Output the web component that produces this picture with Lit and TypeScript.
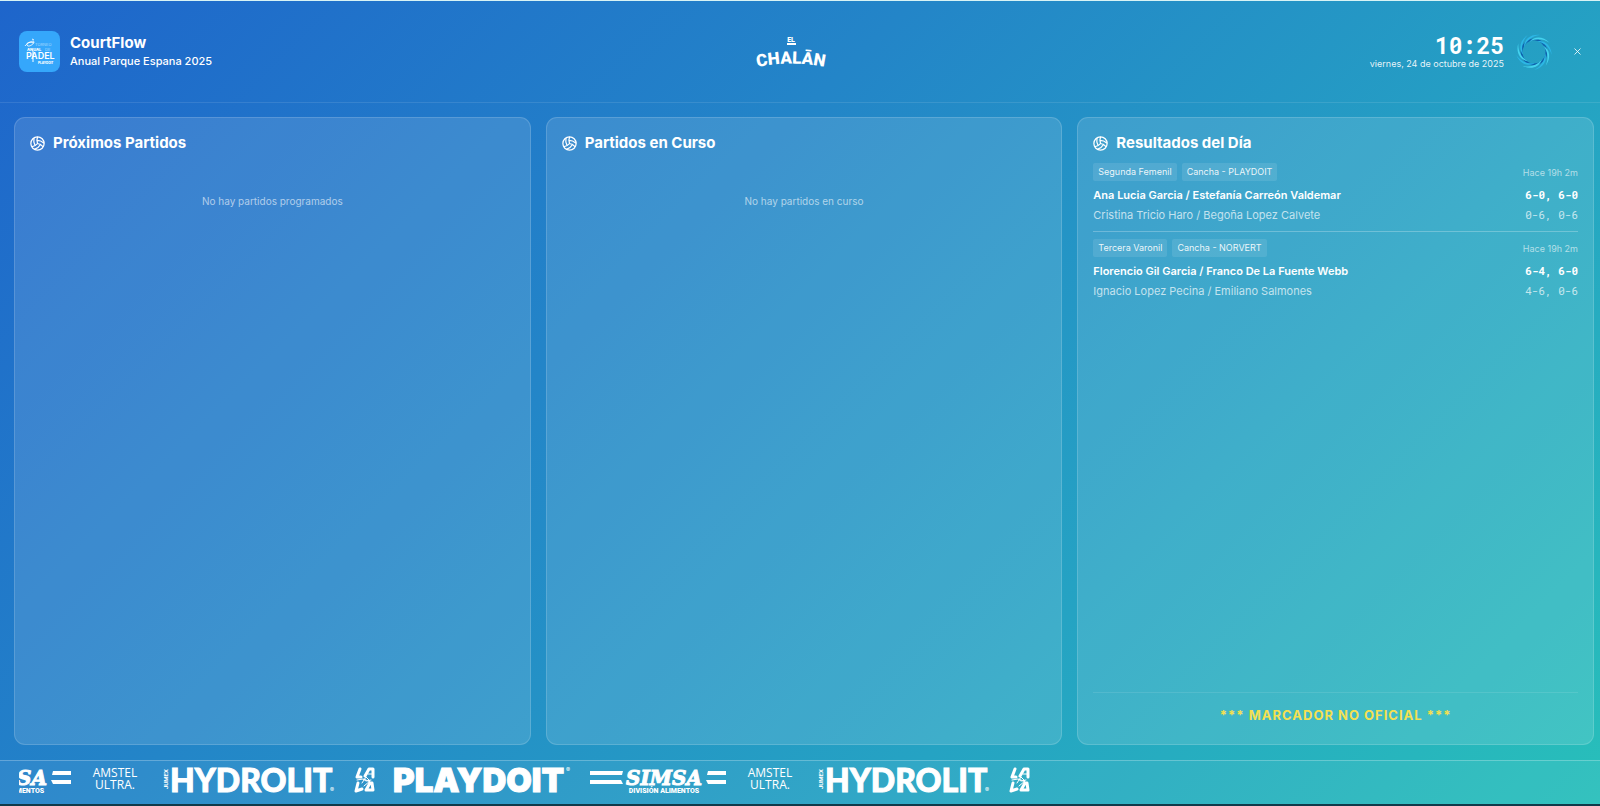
import { LitElement, html, svg, css } from "lit";
import { customElement, property, state } from "lit/decorators.js";

interface Match {
  category: string;
  court: string;
  ago: string;
  winner: string;
  winnerScore: string;
  loser: string;
  loserScore: string;
}

const RESULTS: Match[] = [
  {
    category: "Segunda Femenil",
    court: "Cancha - PLAYDOIT",
    ago: "Hace 19h 2m",
    winner: "Ana Lucia Garcia / Estefanía Carreón Valdemar",
    winnerScore: "6-0, 6-0",
    loser: "Cristina Tricio Haro / Begoña Lopez Calvete",
    loserScore: "0-6, 0-6",
  },
  {
    category: "Tercera Varonil",
    court: "Cancha - NORVERT",
    ago: "Hace 19h 2m",
    winner: "Florencio Gil Garcia / Franco De La Fuente Webb",
    winnerScore: "6-4, 6-0",
    loser: "Ignacio Lopez Pecina / Emiliano Salmones",
    loserScore: "4-6, 0-6",
  },
];

const SPONSORS = ["simsa", "amstel", "hydrolit", "la", "playdoit", "simsa", "amstel", "hydrolit", "la"];

@customElement("court-panel")
class CourtPanel extends LitElement {
  @property() heading = "";

  static styles = css`
    :host {
      display: flex;
      flex-direction: column;
      min-width: 0;
      box-sizing: border-box;
      padding: 15px;
      border: 1px solid rgba(255, 255, 255, 0.15);
      border-radius: 11px;
      background: rgba(255, 255, 255, 0.12);
    }
    .head {
      display: flex;
      align-items: center;
      gap: 8px;
      height: 20px;
      margin-bottom: 10px;
    }
    .ball {
      width: 15px;
      height: 15px;
      fill: none;
      stroke: #fff;
      stroke-width: 2;
      stroke-linecap: round;
    }
    .title {
      margin: 0;
      font-size: 15px;
      line-height: 20px;
      font-weight: 700;
    }
  `;

  render() {
    return html`
      <div class="head">
        <svg class="ball" viewBox="0 0 24 24" aria-hidden="true">
          <circle cx="12" cy="12" r="10.6" />
          <path d="M11.1 7.1a16.55 16.55 0 0 1 10.9 4M12 12a12.6 12.6 0 0 1-8.7 5M16.8 13.6a16.55 16.55 0 0 1-9 7.5M20.7 17a12.8 12.8 0 0 0-8.7-5 13.3 13.3 0 0 1 0-10M6.3 3.8a16.55 16.55 0 0 0 1.9 11.5" />
        </svg>
        <h2 class="title">${this.heading}</h2>
      </div>
      <slot></slot>
    `;
  }
}

@customElement("sponsor-logo")
class SponsorLogo extends LitElement {
  @property() name = "";

  static styles = css`
    :host {
      display: block;
      flex: none;
    }
    svg {
      display: block;
      height: 30px;
      fill: #fff;
      stroke: none;
      overflow: visible;
    }
    .simsa {
      font: italic 700 20px "DejaVu Serif", serif;
      stroke: #fff;
      stroke-width: 1;
    }
    .division {
      font: 900 7px Roboto, sans-serif;
    }
    .amstel {
      font: 500 12px "Open Sans", sans-serif;
    }
    .hydrolit {
      font: 900 32px Lato, sans-serif;
      stroke: #fff;
      stroke-width: 1;
    }
    .playdoit {
      font: 900 33px Inter, sans-serif;
      stroke: #fff;
      stroke-width: 1;
    }
    .jumex {
      font: 700 6px Roboto, sans-serif;
    }
    .mark {
      font: 400 6px Inter, sans-serif;
    }
    .line {
      fill: none;
      stroke: #fff;
      stroke-width: 3;
      stroke-linejoin: round;
      stroke-linecap: round;
    }
    .thin {
      stroke-width: 1;
    }
  `;

  private art() {
    switch (this.name) {
      case "simsa":
        return html`<svg width="136" viewBox="0 0 136 30" role="img" aria-label="SIMSA División Alimentos">
          <path d="M0 4h33l-1 4H0zM0 13h31l2 4H0zM118 4h18v4h-19zM116 13h20v4h-18z" />
          <text class="simsa" x="74" y="18" text-anchor="middle">SIMSA</text>
          <text class="division" x="74" y="26" text-anchor="middle">DIVISIÓN ALIMENTOS</text>
        </svg>`;
      case "amstel":
        return html`<svg width="51" viewBox="0 0 51 30" role="img" aria-label="Amstel Ultra">
          <text class="amstel" x="25" y="10" text-anchor="middle">AMSTEL</text>
          <text class="amstel" x="25" y="22" text-anchor="middle">ULTRA.</text>
        </svg>`;
      case "hydrolit":
        return html`<svg width="175" viewBox="0 0 175 30" role="img" aria-label="Hydrolit">
          <text class="jumex" transform="translate(8 22) rotate(-90)">JUMEX</text>
          <text class="hydrolit" x="10" y="25">HYDROLIT</text>
          <text class="mark" x="170" y="25">®</text>
        </svg>`;
      case "la":
        return html`<svg width="21" viewBox="0 0 21 30" role="img" aria-label="LA">
          <path class="line" d="M6 2 3 10h4M11 9l4-7h4v8M4 16 2 24l6-2M12 23l4-7h2l1 7z" />
          <path class="line thin" d="M3 13l6-1 3 2 5-1M8 16l4-6 4 4-6 5M14 7h4M10 12l6 3" />
        </svg>`;
      default:
        return html`<svg width="177" viewBox="0 0 177 30" role="img" aria-label="Playdoit">
          <text class="playdoit" x="-1" y="25">PLAYDOIT</text>
          <text class="mark" x="172" y="5">®</text>
        </svg>`;
    }
  }

  render() {
    return this.art();
  }
}

@customElement("app-root")
class AppRoot extends LitElement {
  @state() private tickerOffset = 84;

  static styles = css`
    :host {
      display: flex;
      flex-direction: column;
      box-sizing: border-box;
      min-height: 100vh;
      border-top: 1px solid #d8f3f5;
      border-bottom: 2px solid #103a4a;
      background: linear-gradient(135deg, #1e65cb 0%, #2385c8 38%, #25a3c3 70%, #28bfba 100%);
      color: #fff;
      font-family: Inter, "Liberation Sans", sans-serif;
      font-size: 11px;
    }
    .header {
      display: flex;
      justify-content: space-between;
      align-items: center;
      height: 101px;
      padding: 0 15px 0 19px;
      border-bottom: 1px solid rgba(255, 255, 255, 0.1);
    }
    .brand {
      display: flex;
      align-items: center;
      gap: 10px;
    }
    .badge {
      width: 41px;
      height: 41px;
    }
    .name {
      margin: 0;
      font-size: 15px;
      line-height: 19px;
      font-weight: 700;
    }
    .event {
      margin: 0;
      font-size: 11px;
      line-height: 18px;
      font-weight: 500;
    }
    .chalan {
      display: block;
      width: 76px;
      height: 34px;
      fill: #fff;
      overflow: visible;
    }
    .chalan-name {
      font: 900 17px Roboto, sans-serif;
    }
    .chalan-el {
      font: 900 7px Roboto, sans-serif;
    }
    .status {
      display: flex;
      justify-content: flex-end;
      align-items: center;
    }
    .clock {
      text-align: right;
    }
    .time {
      font: 700 23px/24px "Roboto Mono", "DejaVu Sans Mono", monospace;
    }
    .date {
      font-size: 9px;
      line-height: 13px;
      color: rgba(255, 255, 255, 0.9);
    }
    .swirl {
      width: 40px;
      height: 40px;
      margin-left: 10px;
    }
    .close {
      display: grid;
      place-items: center;
      width: 16px;
      height: 16px;
      margin-left: 15px;
      padding: 0;
      border: 0;
      background: none;
    }
    .close svg {
      width: 7px;
      height: 7px;
      stroke: rgba(255, 255, 255, 0.8);
    }
    .board {
      flex: 1;
      display: grid;
      grid-template-columns: repeat(3, minmax(0, 1fr));
      gap: 15px;
      padding: 14px 6px 15px 14px;
    }
    .empty {
      margin: 30px 0 0;
      text-align: center;
      font-size: 10px;
      line-height: 16px;
      color: rgba(255, 255, 255, 0.6);
    }
    .results {
      flex: 1;
      margin: 0;
      padding: 0;
      list-style: none;
    }
    .match {
      padding-bottom: 6px;
    }
    .match + .match {
      border-top: 1px solid rgba(255, 255, 255, 0.25);
      padding-top: 7px;
    }
    .meta {
      display: flex;
      align-items: center;
      gap: 5px;
      margin-bottom: 4px;
    }
    .chip {
      padding: 0 5px;
      border-radius: 2px;
      background: rgba(255, 255, 255, 0.1);
      font-size: 9px;
      line-height: 18px;
      color: rgba(255, 255, 255, 0.9);
    }
    .ago {
      margin-left: auto;
      font-size: 9px;
      color: rgba(255, 255, 255, 0.6);
    }
    .row {
      display: flex;
      justify-content: space-between;
      line-height: 20px;
      color: rgba(255, 255, 255, 0.7);
    }
    .row.won {
      color: #fff;
      font-weight: 600;
    }
    .score {
      font-family: "Roboto Mono", "DejaVu Sans Mono", monospace;
      font-size: 11px;
    }
    .won .score {
      font-weight: 700;
    }
    .notice {
      margin: 0;
      padding: 12px 0 4px;
      border-top: 1px solid rgba(255, 255, 255, 0.1);
      text-align: center;
      font-size: 13px;
      line-height: 20px;
      font-weight: 700;
      letter-spacing: 1px;
      color: #f5e050;
    }
    .ticker {
      padding: 6px 19px 7px;
      border-top: 1px solid rgba(255, 255, 255, 0.25);
      background: rgba(255, 255, 255, 0.06);
    }
    .window {
      overflow: hidden;
    }
    .track {
      display: flex;
      gap: 19px;
    }
  `;

  private renderBadge() {
    return html`<svg class="badge" viewBox="0 0 41 41" role="img" aria-label="Torneo Anual Padel Playdoit">
      <rect width="41" height="41" rx="8" fill="#35a7fb" />
      <g fill="#fff" font-family="Inter, sans-serif">
        <path d="M6 15c3-4 9-6 9-4s-6 6-7 3 4-3 7-2M13 8l2 1" fill="none" stroke="#fff" stroke-width="0.9" />
        <text x="16" y="15" font-size="4" opacity="0.5">TORNEO</text>
        <text x="8" y="20" font-size="4" font-weight="800">ANUAL</text>
        <text x="26" y="20" font-size="4" opacity="0.5">DE</text>
        <text x="7" y="28" font-size="9" font-weight="600">PADEL</text>
        <path d="M14 20v11" stroke="#fff" stroke-width="1" />
        <text x="19" y="33" font-size="3" font-weight="800">PLAYDOIT</text>
      </g>
    </svg>`;
  }

  private renderSwirl() {
    const outer = Array.from({ length: 9 }, (_, i) => i * 40);
    const inner = Array.from({ length: 9 }, (_, i) => i * 40 + 20);
    return html`<svg class="swirl" viewBox="-20 -20 40 40" aria-hidden="true">
      ${inner.map(
        (a) => svg`<path transform="rotate(${a})" fill="#0f62ae"
          d="M-13 0C-14 -7 -7 -13 1 -13C-5 -12 -10 -8 -13 0Z" />`
      )}
      ${outer.map(
        (a, i) => svg`<path transform="rotate(${a})" fill=${i % 2 ? "#45d3ef" : "#2db6e6"}
          d="M-10 -5C-10 -13 -3 -18 6 -17C-2 -16 -7 -12 -10 -5Z" />`
      )}
    </svg>`;
  }

  render() {
    return html`
      <header class="header">
        <div class="brand">
          ${this.renderBadge()}
          <div>
            <h1 class="name">CourtFlow</h1>
            <p class="event">Anual Parque Espana 2025</p>
          </div>
        </div>
        <svg class="chalan" viewBox="0 0 76 34" role="img" aria-label="El Chalán">
          <path id="arc" d="M0 33Q38 24 76 33" fill="none" />
          <text class="chalan-el" x="38" y="7" text-anchor="middle">EL</text>
          <path d="M34 8h9v2h-9z" />
          <text class="chalan-name" text-anchor="middle"><textPath href="#arc" startOffset="50%">CHALĀN</textPath></text>
        </svg>
        <div class="status">
          <div class="clock">
            <div class="time">10:25</div>
            <div class="date">viernes, 24 de octubre de 2025</div>
          </div>
          ${this.renderSwirl()}
          <button class="close" aria-label="Cerrar">
            <svg viewBox="0 0 7 7"><path d="M0.5 0.5 6.5 6.5M6.5 0.5 0.5 6.5" /></svg>
          </button>
        </div>
      </header>
      <main class="board">
        <court-panel heading="Próximos Partidos">
          <p class="empty">No hay partidos programados</p>
        </court-panel>
        <court-panel heading="Partidos en Curso">
          <p class="empty">No hay partidos en curso</p>
        </court-panel>
        <court-panel heading="Resultados del Día">
          <ul class="results">
            ${RESULTS.map(
              (m) => html`<li class="match">
                <div class="meta">
                  <span class="chip">${m.category}</span>
                  <span class="chip">${m.court}</span>
                  <span class="ago">${m.ago}</span>
                </div>
                <div class="row won"><span>${m.winner}</span><span class="score">${m.winnerScore}</span></div>
                <div class="row"><span>${m.loser}</span><span class="score">${m.loserScore}</span></div>
              </li>`
            )}
          </ul>
          <p class="notice">*** MARCADOR NO OFICIAL ***</p>
        </court-panel>
      </main>
      <footer class="ticker">
        <div class="window">
          <div class="track" style="transform: translateX(${-this.tickerOffset}px)">
            ${SPONSORS.map((name) => html`<sponsor-logo name=${name}></sponsor-logo>`)}
          </div>
        </div>
      </footer>
    `;
  }
}
